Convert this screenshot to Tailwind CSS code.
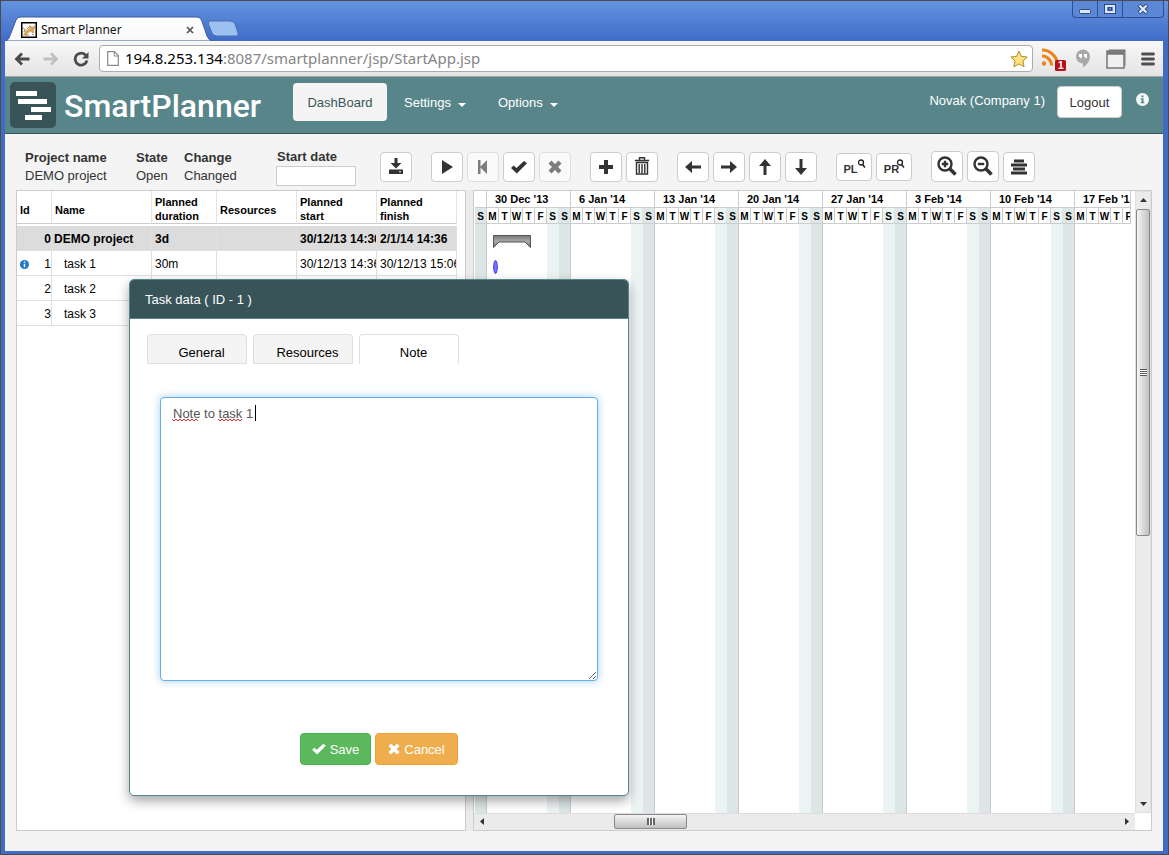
<!DOCTYPE html>
<html lang="en">
<head>
<meta charset="utf-8">
<title>Smart Planner</title>
<script src="https://cdn.jsdelivr.net/npm/@tailwindcss/browser@4"></script>
</head>
<body class="relative flex h-screen flex-col overflow-hidden border border-[#4b4b4b] bg-[#3f6cc4] font-['Liberation_Sans',Arial,sans-serif] text-[13px] text-[#333]">

<!-- window title bar with tabs -->
<div class="flex h-10 shrink-0 justify-between bg-linear-to-b from-[#6593e0] to-[#406cc8]">
  <div class="relative flex items-end">
    <svg class="absolute bottom-0 left-1" width="240" height="25" viewBox="0 0 240 25" aria-hidden="true">
      <defs><linearGradient id="tabfill" x1="0" y1="0" x2="0" y2="1"><stop offset="0" stop-color="#fff"/><stop offset="1" stop-color="#f8f8f8"/></linearGradient></defs>
      <path d="M0 25C4 24 4 22 6 17L11 4Q12.500 1 15 1H192Q195 1 196.500 4L202 20Q204 25 208 25Z" fill="url(#tabfill)" stroke="#3a5a9c" stroke-width="1"/>
      <path d="M204 5H225Q229 5 230 8L233 17Q234 20 231 20H212Q208 20 207 17L203.500 8Q203 5 205 5Z" fill="#9cc0f0" stroke="#4a70b4"/>
    </svg>
    <div class="relative mb-[3px] ml-5 flex w-[177px] items-center font-['Noto_Sans',sans-serif] text-xs text-[#111]">
      <svg width="16" height="16" viewBox="0 0 16 16" aria-hidden="true"><rect x=".75" y=".75" width="14.500" height="14.500" fill="#fff" stroke="#000" stroke-width="1.500"/><path d="M9 3l1.500 1.500h2L14 3v3.500l-1 1.500v3h-2l-1-1.500-3 1.500-2 2.500H2l1-2 2-3.500L8 7z" fill="#d8a95c"/><path d="M2 6l2 1.500L3 10M6 7l3-3M11 12l2 1M4 13h4" stroke="#76624a" stroke-width=".8" fill="none"/></svg>
      <span class="ml-1 flex-1">Smart Planner</span>
      <button aria-label="Close tab" class="flex size-4 items-center justify-center"><svg width="8" height="8" viewBox="0 0 8 8"><path d="M1 1l6 6M7 1L1 7" stroke="#555" stroke-width="1.700"/></svg></button>
    </div>
  </div>
  <div class="mr-1 flex h-[17px] rounded-b border border-t-0 border-[#2f4e8e] bg-[#5b87d6]">
    <button aria-label="Minimize" class="flex w-[25px] items-end justify-center border-r border-[#2f4e8e] pb-[3px]"><svg width="12" height="5" viewBox="0 0 12 5"><rect x=".5" y=".5" width="11" height="4" rx="1" fill="#dce6f8" stroke="#2f4a80"/></svg></button>
    <button aria-label="Maximize" class="flex w-[25px] items-center justify-center border-r border-[#2f4e8e]"><svg width="12" height="10" viewBox="0 0 12 10"><rect x="1.500" y="1.500" width="9" height="7" fill="none" stroke="#2f4a80" stroke-width="3"/><rect x="2" y="2" width="8" height="6" fill="none" stroke="#dce6f8" stroke-width="2"/><rect x="4.500" y="3.500" width="3" height="3" fill="none" stroke="#2f4a80"/></svg></button>
    <button aria-label="Close window" class="flex w-10 items-center justify-center"><svg width="12" height="10" viewBox="0 0 12 10"><path d="M2 1l8 8M10 1L2 9" stroke="#2f4a80" stroke-width="4"/><path d="M2.500 1.500l7 7M9.500 1.500l-7 7" stroke="#e4ecfa" stroke-width="2.200"/></svg></button>
  </div>
</div>

<div class="mr-[5px] mb-[3px] ml-1 flex min-h-0 flex-1 flex-col bg-[#f4f4f4]">
  <!-- browser toolbar -->
  <div class="flex h-9 shrink-0 items-center border-b border-[#a5a5a5] bg-linear-to-b from-[#f8f8f8] to-[#e4e4e4] pr-2 pl-[9px]">
    <button aria-label="Back" class="mr-[13px]"><svg width="16" height="14" viewBox="0 0 16 14"><path d="M15.500 7H3M8 1.500L2.500 7 8 12.500" fill="none" stroke="#4a4a4a" stroke-width="2.800"/></svg></button>
    <button aria-label="Forward" class="mr-[13px]"><svg width="16" height="14" viewBox="0 0 16 14"><path d="M.5 7H13M8 1.500L13.500 7 8 12.500" fill="none" stroke="#c0c0c0" stroke-width="2.800"/></svg></button>
    <button aria-label="Reload" class="mr-[9px]"><svg width="18" height="16" viewBox="0 0 18 16"><path d="M14 4.500A6 6 0 1 0 15 9.500" fill="none" stroke="#4a4a4a" stroke-width="2.800"/><path d="M16.500 1v6.500H10z" fill="#4a4a4a"/></svg></button>
    <div class="flex h-[27px] min-w-0 flex-1 items-center rounded-sm border border-[#ababab] bg-white pr-1 pl-[7px]">
      <svg width="12" height="15" viewBox="0 0 12 15" aria-hidden="true"><path d="M.7.700H7.500L11.300 4.500V14.300H.7Z" fill="#fff" stroke="#8a8a8a" stroke-width="1.200"/><path d="M7.200 1v4h4" fill="none" stroke="#8a8a8a"/></svg>
      <div class="mb-px ml-[6px] min-w-0 flex-1 truncate font-['Noto_Sans',sans-serif] text-[15px] leading-6 text-[#858585]"><span class="text-black">194.8.253.134</span>:8087/smartplanner/jsp/StartApp.jsp</div>
      <button aria-label="Bookmark this page"><svg width="18" height="18" viewBox="0 0 18 18"><path d="M9 1l2.400 5.400 5.800.6-4.300 4 1.200 5.800L9 13.900 3.900 16.800 5.100 11 .8 7l5.800-.6z" fill="#fbe37d" stroke="#b98a2c" stroke-linejoin="round"/></svg></button>
    </div>
    <button aria-label="RSS feeds, 1 new" class="ml-2"><svg width="26" height="24" viewBox="0 0 26 24"><g fill="none" stroke="#e8851c" stroke-width="3.200"><path d="M1 3A15.500 15.500 0 0 1 16.500 18.500M1 9A9.500 9.500 0 0 1 10.500 18.500"/></g><circle cx="3" cy="16.500" r="2.200" fill="#e8851c"/><rect x="14" y="13" width="11" height="11" rx="1.500" fill="#b3101c"/><text x="17" y="22" font-size="10" font-weight="bold" fill="#fff">1</text></svg></button>
    <button aria-label="Hangouts" class="ml-2"><svg width="16" height="19" viewBox="0 0 16 19"><path d="M8 .5a7 7 0 0 1 7 7c0 5-3.500 8.500-7 11v-4A7 7 0 0 1 8 .5z" fill="#a9a9a9"/><path d="M4 5h3v3.500L5.500 10V8H4zM9 5h3v3.500L10.500 10V8H9z" fill="#fff"/></svg></button>
    <button aria-label="Windows" class="ml-[15px]"><svg width="20" height="20" viewBox="0 0 20 20"><path d="M3 .5h16.500V17h-1V3H3z" fill="#777"/><rect x="1" y="2" width="17" height="17" fill="#f0f0f0" stroke="#777" stroke-width="1.500"/><path d="M1 4h17" stroke="#777" stroke-width="3.500"/></svg></button>
    <button aria-label="Menu" class="ml-[15px]"><svg width="14" height="14" viewBox="0 0 14 14"><path d="M1.500 2h11M1.500 7h11M1.500 12h11" stroke="#4f4f4f" stroke-width="2.800" stroke-linecap="round"/></svg></button>
  </div>

  <!-- application header -->
  <header class="flex h-[57px] shrink-0 border-b border-[#385459] bg-[#57858a] text-white">
    <svg class="mt-[5px] ml-[5px]" width="46" height="46" viewBox="0 0 46 46" aria-hidden="true"><rect width="46" height="46" rx="5" fill="#385459"/><path d="M6 9h21v5H6zM8 17h29v5H8zM21 25h20v5H21zM15 33h17v5H15z" fill="#fff"/></svg>
    <div class="ml-2 w-[200px] font-[Roboto,sans-serif] text-[32px] leading-[58px] font-medium">SmartPlanner</div>
    <nav class="flex">
      <a href="#" class="mt-[6px] ml-[29px] h-[38px] w-[94px] rounded bg-[#f4f4f4] text-center leading-10 text-[#385459]">DashBoard</a>
      <a href="#" class="ml-[17px] flex h-[52px] items-center gap-[7px]">Settings <svg class="mt-1" width="8" height="4" viewBox="0 0 8 4"><path d="M0 0h8L4 4z" fill="#fff"/></svg></a>
      <a href="#" class="ml-8 flex h-[52px] items-center gap-[7px]">Options <svg class="mt-1" width="8" height="4" viewBox="0 0 8 4"><path d="M0 0h8L4 4z" fill="#fff"/></svg></a>
    </nav>
    <div class="mr-[14px] ml-auto flex">
      <span class="mt-4 mr-3 leading-4">Novak (Company 1)</span>
      <button class="mt-[9px] mr-[14px] h-8 w-[65px] rounded border border-[#ccc] bg-white pt-px text-[#333]">Logout</button>
      <button aria-label="Information" class="mt-4 h-[13px]"><svg width="13" height="13" viewBox="0 0 13 13"><circle cx="6.500" cy="6.500" r="6.500" fill="#f4f8f8"/><path d="M5.500 2.500h2v1.700h-2zM4.800 5.200h2.700V9h.8v1.200H4.800V9h.8V6.400h-.8z" fill="#57858a"/></svg></button>
    </div>
  </header>

  <!-- project information and tools -->
  <div class="flex h-14 shrink-0 pl-5 leading-[18px]">
    <div class="mt-[15px] w-[111px]"><b>Project name</b><br>DEMO project</div>
    <div class="mt-[15px] w-12"><b>State</b><br>Open</div>
    <div class="mt-[15px] w-[92px]"><b>Change</b><br>Changed</div>
    <div class="mt-[14px] w-20">
      <label for="start" class="block pl-px font-bold">Start date</label>
      <input id="start" type="text" class="block h-5 w-20 border border-[#ccc] bg-white px-1">
    </div>
    <div class="mt-[18px] ml-6 flex h-[30px] items-center text-[#333]">
      <button aria-label="Download" class="flex h-[30px] w-8 items-center justify-center rounded border border-[#ccc] bg-white"><svg class="-mt-[2px]" width="16" height="16" viewBox="0 0 16 16"><path d="M6.500 0h3v5h4L8 10.500 2.500 5h4zM1 11.500h14V16H1z" fill="#333"/><path d="M11 13.800h2" stroke="#fff"/></svg></button>
      <div class="ml-[19px] flex gap-1">
        <button aria-label="Start task" class="flex h-[30px] w-8 items-center justify-center rounded border border-[#ccc] bg-white"><svg width="14" height="14" viewBox="0 0 14 14"><path d="M2 0l11 7-11 7z" fill="#333"/></svg></button>
        <button disabled aria-label="Step back" class="flex h-[30px] w-8 items-center justify-center rounded border border-[#ddd] bg-[#fafafa]"><svg width="14" height="14" viewBox="0 0 14 14"><path d="M2 0h2.500v6.500l6.500-6.500v14L4.500 7.500V14H2z" fill="#7d7d7d"/></svg></button>
        <button aria-label="Finish task" class="flex h-[30px] w-8 items-center justify-center rounded border border-[#ccc] bg-white"><svg width="16" height="14" viewBox="0 0 16 14"><path d="M0 8l2.500-2.500L5.500 8 13 1l3 2.300L5.800 13.500z" fill="#333"/></svg></button>
        <button disabled aria-label="Cancel task" class="flex h-[30px] w-8 items-center justify-center rounded border border-[#ddd] bg-[#fafafa]"><svg width="14" height="14" viewBox="0 0 14 14"><path d="M3.500.5L7 4 10.500.5l3 3L10 7l3.500 3.500-3 3L7 10l-3.500 3.500-3-3L4 7 .5 3.500z" fill="#7d7d7d"/></svg></button>
      </div>
      <div class="ml-[19px] flex gap-1">
        <button aria-label="Add task" class="flex h-[30px] w-8 items-center justify-center rounded border border-[#ccc] bg-white"><svg width="16" height="16" viewBox="0 0 16 16"><path d="M6 1h4v5h5v4h-5v5H6v-5H1V6h5z" fill="#333"/></svg></button>
        <button aria-label="Delete task" class="flex h-[30px] w-8 items-center justify-center rounded border border-[#ccc] bg-white"><svg class="-mt-[2px]" width="16" height="18" viewBox="0 0 16 18"><path d="M5.500 3V.7h5V3M.8 3.500h14.400M2.500 5.500h11V17h-11zM5.200 7v9M8 7v9M10.800 7v9" fill="none" stroke="#333" stroke-width="1.400"/></svg></button>
      </div>
      <div class="ml-[19px] flex gap-1">
        <button aria-label="Move left" class="flex h-[30px] w-8 items-center justify-center rounded border border-[#ccc] bg-white"><svg width="16" height="12" viewBox="0 0 16 12"><path d="M7 0v4.500h9v3H7V12L0 6z" fill="#333"/></svg></button>
        <button aria-label="Move right" class="flex h-[30px] w-8 items-center justify-center rounded border border-[#ccc] bg-white"><svg width="16" height="12" viewBox="0 0 16 12"><path d="M9 0v4.500H0v3h9V12l7-6z" fill="#333"/></svg></button>
        <button aria-label="Move up" class="flex h-[30px] w-8 items-center justify-center rounded border border-[#ccc] bg-white"><svg width="12" height="16" viewBox="0 0 12 16"><path d="M0 7h4.500v9h3V7H12L6 0z" fill="#333"/></svg></button>
        <button aria-label="Move down" class="flex h-[30px] w-8 items-center justify-center rounded border border-[#ccc] bg-white"><svg width="12" height="16" viewBox="0 0 12 16"><path d="M0 9h4.500V0h3v9H12l-6 7z" fill="#333"/></svg></button>
      </div>
      <div class="ml-[19px] flex gap-1">
        <button aria-label="PL search" class="flex h-7 w-9 items-center justify-center rounded border border-[#ccc] bg-white pl-px text-[11px] font-bold"><span class="pt-1">PL</span><svg class="-ml-px mb-[7px]" width="9" height="9" viewBox="0 0 9 9"><circle cx="4" cy="3.500" r="2.500" fill="none" stroke="#222" stroke-width="1.300"/><path d="M5.500 5.500l2.500 3" stroke="#222" stroke-width="1.500"/></svg></button>
        <button aria-label="PR search" class="flex h-7 w-9 items-center justify-center rounded border border-[#ccc] bg-white pl-px text-[11px] font-bold"><span class="pt-1">PR</span><svg class="-ml-[3px] mb-[7px]" width="9" height="9" viewBox="0 0 9 9"><circle cx="4" cy="3.500" r="2.500" fill="none" stroke="#222" stroke-width="1.300"/><path d="M5.500 5.500l2.500 3" stroke="#222" stroke-width="1.500"/></svg></button>
      </div>
      <div class="ml-[19px] flex items-end gap-1">
        <button aria-label="Zoom in" class="-mt-px flex h-[31px] w-8 items-center justify-center rounded border border-[#ccc] bg-white"><svg class="-mt-[2px]" width="20" height="20" viewBox="0 0 20 20"><circle cx="8" cy="8" r="6.500" fill="none" stroke="#333" stroke-width="2.400"/><path d="M12.800 12.800L18.500 18.500" stroke="#333" stroke-width="3.600"/><path d="M8 4.800v6.400M4.800 8h6.400" stroke="#333" stroke-width="2.400"/></svg></button>
        <button aria-label="Zoom out" class="-mt-px flex h-[31px] w-8 items-center justify-center rounded border border-[#ccc] bg-white"><svg class="-mt-[2px]" width="20" height="20" viewBox="0 0 20 20"><circle cx="8" cy="8" r="6.500" fill="none" stroke="#333" stroke-width="2.400"/><path d="M12.800 12.800L18.500 18.500" stroke="#333" stroke-width="3.600"/><path d="M4.800 8h6.400" stroke="#333" stroke-width="2.400"/></svg></button>
        <button aria-label="Align center" class="flex h-[30px] w-8 items-center justify-center rounded border border-[#ccc] bg-white"><svg width="16" height="16" viewBox="0 0 16 16"><path d="M3 .5h10v3H3zM0 4.500h16v3H0zM2 8.500h12v3H2zM0 12.500h16v3H0z" fill="#333"/></svg></button>
      </div>
    </div>
  </div>

  <!-- task list and chart -->
  <main class="mr-[11px] mb-5 ml-[11px] flex min-h-0 flex-1 bg-[#ebebeb] text-black">
    <section class="w-[450px] shrink-0 border border-[#ccc] bg-white">
      <table class="w-[440px] table-fixed border-separate border-spacing-0 text-left text-xs">
        <colgroup><col class="w-[35px]"><col class="w-[100px]"><col class="w-[65px]"><col class="w-20"><col class="w-20"><col class="w-20"></colgroup>
        <thead class="text-[11px] leading-[14px] [&_th]:h-[33px] [&_th]:border-r [&_th]:border-b [&_th]:border-r-[#e4e4e4] [&_th]:border-b-[#ccc] [&_th]:px-[3px] [&_th]:pt-1">
          <tr><th class="pt-[6px]!">Id</th><th class="pt-[6px]!">Name</th><th>Planned<br>duration</th><th class="pt-[6px]!">Resources</th><th>Planned<br>start</th><th>Planned<br>finish</th></tr>
        </thead>
        <tbody class="[&_td]:h-[25px] [&_td]:overflow-hidden [&_td]:border-r [&_td]:border-b [&_td]:border-[#e0e0e0] [&_td]:pt-[2px] [&_td]:pl-[3px] [&_td]:whitespace-nowrap">
          <tr aria-hidden="true"><td class="h-[2px]! border-0! p-0!" colspan="6"></td></tr>
          <tr class="bg-[#dcdcdc] font-bold [&_td]:border-[#ccc]"><td class="text-right">0</td><td class="pl-[2px]!">DEMO project</td><td>3d</td><td></td><td>30/12/13 14:36</td><td>2/1/14 14:36</td></tr>
          <tr><td><div class="flex items-center justify-between"><svg width="9" height="9" viewBox="0 0 9 9" aria-label="Has note"><circle cx="4.500" cy="4.500" r="4.500" fill="#1e78c8"/><path d="M4.500 1.500v1.300M4.500 3.800v3.500" stroke="#fff" stroke-width="1.500"/></svg>1</div></td><td class="pl-3!">task 1</td><td>30m</td><td></td><td>30/12/13 14:36</td><td>30/12/13 15:06</td></tr>
          <tr><td class="text-right">2</td><td class="pl-3!">task 2</td><td></td><td></td><td></td><td></td></tr>
          <tr><td class="text-right">3</td><td class="pl-3!">task 3</td><td></td><td></td><td></td><td></td></tr>
        </tbody>
      </table>
    </section>

    <section class="ml-[7px] flex min-w-0 flex-1 flex-col border border-[#ccc] bg-white">
      <div class="flex min-h-0 flex-1">
        <div class="relative flex min-w-0 flex-1 flex-col overflow-hidden">
          <div id="scale" class="mr-1 flex shrink-0 overflow-hidden border-r border-[#ccc] pl-px"></div>
          <div id="days" class="flex min-h-0 flex-1 overflow-hidden pl-px"></div>
          <svg class="absolute top-11 left-[19px]" width="38" height="13" viewBox="0 0 38 13" aria-label="DEMO project summary"><defs><linearGradient id="sum" x1="0" y1="0" x2="0" y2="1"><stop offset="0" stop-color="#777"/><stop offset=".5" stop-color="#aaa"/><stop offset="1" stop-color="#666"/></linearGradient></defs><path d="M.5.500h37v12L32 7H6L.5 12.500z" fill="url(#sum)" stroke="#555"/></svg>
          <svg class="absolute top-[69px] left-[19px]" width="5" height="14" viewBox="0 0 5 14" aria-label="task 1 bar"><ellipse cx="2.500" cy="7" rx="1.800" ry="6.500" fill="#7474ff" stroke="#3c3ce6"/></svg>
        </div>
        <!-- vertical scroll bar -->
        <div class="flex w-4 flex-col items-center justify-between border border-[#e0e0e0] bg-[#ebebeb]">
          <svg class="mt-[6px]" width="7" height="4" viewBox="0 0 7 4"><path d="M0 4h7L3.500 0z" fill="#333"/></svg>
          <div class="mt-[7px] flex h-[327px] w-[14px] shrink-0 flex-col items-center justify-center rounded-xs border border-[#888] bg-linear-to-r from-[#f5f5f5] to-[#c0c0c4]"><i class="h-px w-[7px] bg-[#555]"></i><i class="h-px w-[7px] bg-white"></i><i class="h-px w-[7px] bg-[#555]"></i><i class="h-px w-[7px] bg-white"></i><i class="h-px w-[7px] bg-[#555]"></i><i class="h-px w-[7px] bg-white"></i><i class="h-px w-[7px] bg-[#555]"></i></div>
          <svg class="mt-auto mb-[6px]" width="7" height="4" viewBox="0 0 7 4"><path d="M0 0h7L3.500 4z" fill="#333"/></svg>
        </div>
      </div>
      <!-- horizontal scroll bar -->
      <div class="mr-4 flex h-[17px] shrink-0 items-center border-t border-[#ddd] bg-[#ebebeb] pb-px">
        <svg class="ml-[6px]" width="4" height="7" viewBox="0 0 4 7"><path d="M4 0v7L0 3.500z" fill="#333"/></svg>
        <div class="ml-[130px] flex h-[15px] w-[73px] items-center justify-center rounded-xs border border-[#888] bg-linear-to-b from-[#f5f5f5] to-[#c0c0c4]"><i class="h-[7px] w-[2px] bg-[#666]"></i><i class="h-[7px] w-px bg-white"></i><i class="h-[7px] w-[2px] bg-[#666]"></i><i class="h-[7px] w-px bg-white"></i><i class="h-[7px] w-[2px] bg-[#666]"></i></div>
        <svg class="mr-[6px] ml-auto" width="4" height="7" viewBox="0 0 4 7"><path d="M0 0v7l4-3.500z" fill="#333"/></svg>
      </div>
    </section>
  </main>
</div>

<!-- task dialog -->
<div role="dialog" aria-labelledby="dlg-title" class="absolute top-[278px] left-32 flex h-[517px] w-[500px] flex-col rounded-[5px] border border-[#57858a] bg-white shadow-[0_5px_12px_rgba(0,0,0,0.35)]">
  <h2 id="dlg-title" class="h-[39px] shrink-0 rounded-t border-b border-[#57858a] bg-[#385459] pl-[15px] leading-10 text-white">Task data ( ID - 1 )</h2>
  <div role="tablist" class="mt-[15px] ml-[17px] flex gap-[6px] text-black">
    <button role="tab" class="h-[30px] w-[100px] rounded-t border border-[#e0e0e0] bg-[#f4f4f4] pt-[7px] pl-[9px]">General</button>
    <button role="tab" class="h-[30px] w-[100px] rounded-t border border-[#e0e0e0] bg-[#f4f4f4] pt-[7px] pl-[9px]">Resources</button>
    <button role="tab" aria-selected="true" class="h-[30px] w-[100px] rounded-t border border-b-0 border-[#e0e0e0] bg-white pt-[7px] pl-[9px]">Note</button>
  </div>
  <div class="relative mx-[30px] mt-[33px] h-[284px]">
    <textarea aria-label="Note" class="block size-full resize rounded border border-[#66afe9] bg-white px-3 py-[6px] leading-5 text-[#555] shadow-[0_0_8px_rgba(102,175,233,0.6)] outline-none" spellcheck="false">Note to task 1</textarea>
    <svg class="pointer-events-none absolute top-[21px] left-3" width="84" height="4" viewBox="0 0 84 4" aria-hidden="true"><path d="M0 1l2 2 2-2 2 2 2-2 2 2 2-2 2 2 2-2 2 2 2-2 2 2 2-2 2 2M46 1l2 2 2-2 2 2 2-2 2 2 2-2 2 2 2-2 2 2 2-2 2 2 2-2" fill="none" stroke="#e03030"/></svg>
    <i class="pointer-events-none absolute top-2 left-[95px] h-4 w-px bg-black"></i>
  </div>
  <div class="mt-[52px] flex justify-center gap-1 text-white">
    <button class="flex h-8 w-[71px] items-center justify-center gap-1 rounded border border-[#4cae4c] bg-[#5cb85c]"><svg width="14" height="12" viewBox="0 0 16 14"><path d="M0 8l2.500-2.500L5.500 8 13 1l3 2.300L5.800 13.500z" fill="#fff"/></svg><span class="pt-px">Save</span></button>
    <button class="flex h-8 w-[83px] items-center justify-center gap-1 rounded border border-[#eea236] bg-[#f0ad4e]"><svg width="12" height="12" viewBox="0 0 14 14"><path d="M3.500.5L7 4 10.500.5l3 3L10 7l3.500 3.500-3 3L7 10l-3.500 3.500-3-3L4 7 .5 3.500z" fill="#fff"/></svg><span class="pt-px">Cancel</span></button>
  </div>
</div>

<script>
  const dayCell = (letter, i) => {
    const shade = i === 5 ? 'bg-[#ecf3f3]' : i === 6 ? 'bg-[#dde6e7]' : 'bg-white';
    const line = i === 5 ? 'border-r-[#dde6e7]' : 'border-r-[#ccc]';
    return `<div class="h-4 w-3 border-r border-b border-b-[#ccc] pt-[2px] text-center text-[10px] leading-[14px] font-bold ${line} ${shade}">${letter}</div>`;
  };
  const letters = ['M', 'T', 'W', 'T', 'F', 'S', 'S'];
  const labels = ["30 Dec '13", "6 Jan '14", "13 Jan '14", "20 Jan '14", "27 Jan '14", "3 Feb '14", "10 Feb '14", "17 Feb '14"];
  document.getElementById('scale').innerHTML =
    `<div class="w-3 shrink-0"><div class="h-[17px] border-r border-b border-[#ccc]"></div>${dayCell('S', 6)}</div>` +
    labels.map(text => `<div class="w-[84px] shrink-0">
      <div class="h-[17px] border-r border-b border-[#ccc] pl-2 text-[11px] leading-4 font-bold whitespace-nowrap">${text}</div>
      <div class="flex">${letters.map(dayCell).join('')}</div>
    </div>`).join('');
  document.getElementById('days').innerHTML =
    `<div class="w-3 shrink-0 border-r border-[#ccc] bg-[#dde6e7]"></div>` +
    labels.map(() => `<div class="flex w-[84px] shrink-0 justify-end border-r border-[#ccc]"><div class="w-3 bg-[#ecf3f3]"></div><div class="w-[11px] bg-[#dde6e7]"></div></div>`).join('');
</script>
</body>
</html>
